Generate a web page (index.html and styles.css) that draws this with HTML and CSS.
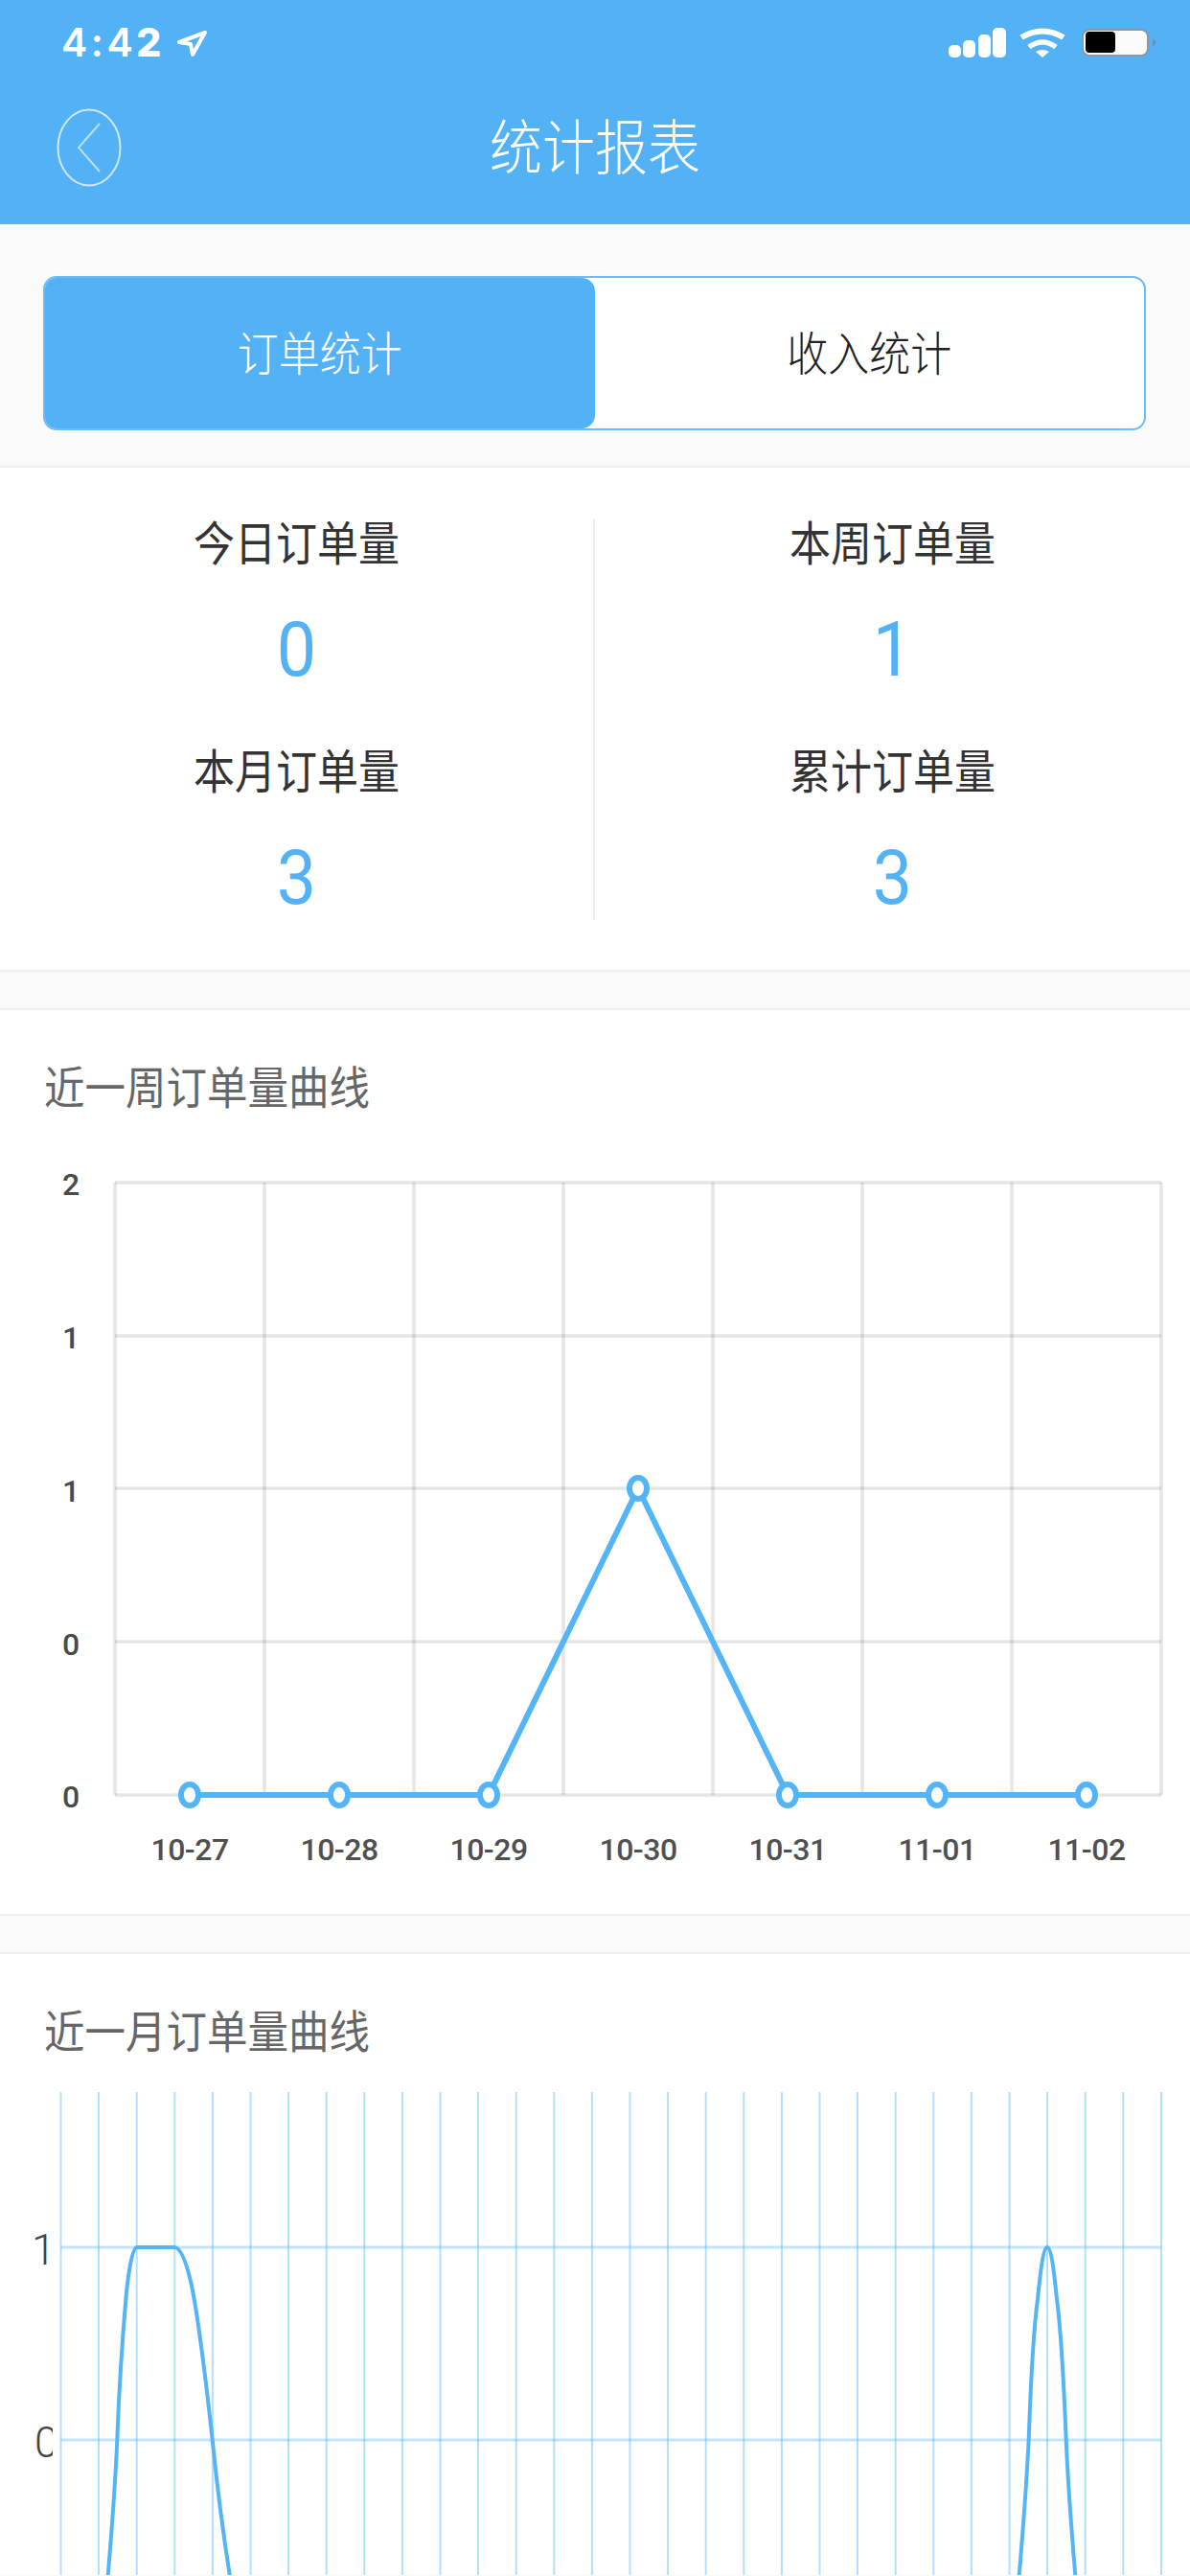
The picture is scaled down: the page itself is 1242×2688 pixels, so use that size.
FILE: index.html
```html
<!DOCTYPE html>
<html lang="zh">
<head>
<meta charset="utf-8">
<title>统计报表</title>
<link rel="stylesheet" href="styles.css">
</head>
<body>
<div class="page">
  <header class="header">
    <div class="status">
      <div class="status-left">
        <span class="time">4:4<b class="time-last">2</b></span>
        <svg class="loc" width="32" height="28" viewBox="0 0 32 28"><path d="M3 12 L30 2 L17 25 L15 14 Z" fill="none" stroke="#fff" stroke-width="4" stroke-linejoin="round"/></svg>
      </div>
      <div class="status-right">
        <svg class="signal" width="60" height="32" viewBox="0 0 60 32"><rect x="0" y="18" width="13" height="13" rx="5" fill="#fff"/><rect x="15" y="13" width="13" height="18" rx="5" fill="#fff"/><rect x="31" y="7" width="13" height="24" rx="5" fill="#fff"/><rect x="46" y="0" width="14" height="31" rx="5" fill="#fff"/></svg>
        <svg class="wifi" width="50" height="32" viewBox="0 0 50 32"><path d="M3 10 Q25 -3 47 10" fill="none" stroke="#fff" stroke-width="6"/><path d="M11 20 Q25 10 39 20" fill="none" stroke="#fff" stroke-width="5.5"/><path d="M18 25 Q25 21 32 25 L25 31 Z" fill="#fff"/></svg>
        <svg class="battery" width="78" height="32" viewBox="0 0 78 32"><rect x="1" y="2" width="68" height="27" rx="7" fill="#fafafa" stroke="#8a97a3" stroke-width="2"/><rect x="4" y="4" width="31" height="22" rx="4" fill="#000"/><path d="M74 11 L78 15.500 L74 20 Z" fill="#7b8a99"/></svg>
      </div>
    </div>
    <div class="navbar">
      <svg class="back" width="68" height="82" viewBox="0 0 68 82"><ellipse cx="34" cy="41" rx="32.500" ry="39.500" fill="none" stroke="#cfe8fc" stroke-width="2"/><path d="M45 16 L23 41 L45 66" fill="none" stroke="#b9defb" stroke-width="2"/></svg>
      <h1 class="nav-title">统计报表</h1>
    </div>
  </header>

  <section class="tabs-wrap">
    <div class="tabs">
      <div class="tab tab-active"><span class="tab-text">订单统计</span></div>
      <div class="tab"><span class="tab-text">收入统计</span></div>
    </div>
  </section>

  <section class="stats">
    <div class="stat-col">
      <div class="stat"><div class="stat-label">今日订单量</div><div class="stat-num"><span>0</span></div></div>
      <div class="stat stat-last"><div class="stat-label">本月订单量</div><div class="stat-num"><span>3</span></div></div>
    </div>
    <div class="stat-col stat-col-right">
      <div class="stat"><div class="stat-label">本周订单量</div><div class="stat-num"><span>1</span></div></div>
      <div class="stat stat-last"><div class="stat-label">累计订单量</div><div class="stat-num"><span>3</span></div></div>
    </div>
  </section>

  <section class="card card-week">
    <h2 class="card-title">近一周订单量曲线</h2>
    <svg class="chart chart-week" width="1242" height="835" viewBox="0 1162 1242 835">
      <g class="grid-gray">
        <path d="M120 1234H1212M120 1394H1212M120 1553H1212M120 1713H1212M120 1873H1212"/>
        <path d="M120 1234V1873M276 1234V1873M432 1234V1873M588 1234V1873M744 1234V1873M900 1234V1873M1056 1234V1873M1212 1234V1873"/>
      </g>
      <g class="ylabels">
        <text x="74" y="1247">2</text>
        <text x="74" y="1407">1</text>
        <text x="74" y="1567">1</text>
        <text x="74" y="1727">0</text>
        <text x="74" y="1886">0</text>
      </g>
      <path class="week-line" d="M198 1873H510L666 1553L822 1873H1134"/>
      <g class="dots">
        <ellipse cx="198" cy="1873" rx="9" ry="11"/>
        <ellipse cx="354" cy="1873" rx="9" ry="11"/>
        <ellipse cx="510" cy="1873" rx="9" ry="11"/>
        <ellipse cx="666" cy="1553" rx="9" ry="11"/>
        <ellipse cx="822" cy="1873" rx="9" ry="11"/>
        <ellipse cx="978" cy="1873" rx="9" ry="11"/>
        <ellipse cx="1134" cy="1873" rx="9" ry="11"/>
      </g>
      <g class="xlabels">
        <text x="198" y="1941">10-27</text>
        <text x="354" y="1941">10-28</text>
        <text x="510" y="1941">10-29</text>
        <text x="666" y="1941">10-30</text>
        <text x="822" y="1941">10-31</text>
        <text x="978" y="1941">11-01</text>
        <text x="1134" y="1941">11-02</text>
      </g>
    </svg>
  </section>

  <section class="card card-month">
    <h2 class="card-title">近一月订单量曲线</h2>
    <svg class="chart chart-month" width="1242" height="540" viewBox="0 2148 1242 540">
      <text class="ymonth" x="58" y="2364">1</text>
      <text class="ymonth" x="61" y="2565">0</text>
      <rect class="mask" x="55" y="2525" width="9" height="50"/>
      <g class="grid-blue">
        <path d="M63.500 2184V2688M103 2184V2688M142.700 2184V2688M182.300 2184V2688M221.900 2184V2688M261.500 2184V2688M301 2184V2688M340.700 2184V2688M380.300 2184V2688M419.900 2184V2688M459.500 2184V2688M499 2184V2688M538.700 2184V2688M578.300 2184V2688M617.900 2184V2688M657.500 2184V2688M697 2184V2688M736.700 2184V2688M776.300 2184V2688M815.900 2184V2688M855.500 2184V2688M895 2184V2688M934.700 2184V2688M974.300 2184V2688M1013.900 2184V2688M1053.500 2184V2688M1093 2184V2688M1132.700 2184V2688M1172.300 2184V2688M1212 2184V2688"/>
      </g>
      <g class="grid-blue-h">
        <path d="M63.500 2346H1212M63.500 2547H1212"/>
      </g>
      <path class="month-line" d="M112 2696 C116 2650 120 2600 122.300 2547 C124 2500 127 2450 131.700 2396 C134 2372 138 2346 143 2346 H182 C190 2346 196 2368 200 2386 C208 2425 216 2495 221.700 2547 C226 2590 232 2640 241 2696"/>
      <path class="month-line" d="M1063 2696 C1067 2650 1071 2600 1073.700 2547 C1076 2480 1079 2430 1083 2400 C1086 2370 1089 2346 1093 2346 C1097 2346 1100 2370 1103 2400 C1107 2430 1110 2480 1112.700 2547 C1115 2600 1119 2650 1123 2696"/>
    </svg>
  </section>
</div>
</body>
</html>
```
FILE: styles.css
```css
* { box-sizing: border-box; margin: 0; padding: 0; }
html, body { width: 1242px; height: 2688px; overflow: hidden; background: #fafafa; }
body { font-family: "Noto Sans CJK SC", "Liberation Sans", sans-serif; }
.page { width: 1242px; height: 2688px; overflow: hidden; display: flex; flex-direction: column; }

.header { height: 234px; background: #53b1f6; flex: none; }
.status { height: 90px; display: flex; justify-content: space-between; padding: 29px 35px 0 64px; }
.status-left { display: flex; align-items: flex-start; gap: 12px; }
.time { font: 600 41px/30px Inter, sans-serif; color: #fff; letter-spacing: 3.5px; }
.time-last { font-weight: 800; }
.loc { margin-top: 3px; }
.status-right { display: flex; align-items: flex-start; }
.signal { margin-right: 13px; }
.wifi { margin-right: 16px; }
.navbar { height: 144px; padding: 23px 0 0 59px; position: relative; }
.back { display: block; }
.nav-title { position: absolute; left: 0; right: 0; top: 20px; text-align: center; font-size: 55px; line-height: 80px; font-weight: 300; color: #fff; transform: scaleY(1.13); }

.tabs-wrap { height: 254px; flex: none; background: #fafafa; border-bottom: 2px solid #eeeeee; padding: 54px 46px 0 45px; }
.tabs { height: 161px; display: flex; border: 2px solid #6cbcf7; border-radius: 14px; overflow: hidden; background: #fff; }
.tab { width: 50%; display: flex; align-items: center; justify-content: center; padding-bottom: 5px; font-size: 43px; font-weight: 300; color: #222; }
.tab-text { display: block; transform: scaleY(1.13); }
.tab-active { background: #53b1f6; color: #fff; border-radius: 0 14px 14px 0; }

.stats { height: 526px; flex: none; display: flex; background: #fff; padding: 53px 0 0; border-bottom: 2px solid #eeeeee; }
.stat-col { width: 621px; height: 419px; border-right: 2px solid #eeeeee; display: flex; flex-direction: column; }
.stat-col-right { flex: 1; border-right: 0; }
.stat { height: 238px; flex: none; text-align: center; }
.stat-last { height: 181px; }
.stat-label { font-size: 43px; line-height: 52px; font-weight: 400; color: #333; margin-top: -3px; transform: scaleY(1.13); }
.stat-num { font: 400 80px/100px Roboto, sans-serif; color: #53b1f6; margin-top: 38px; }
.stat-num span { display: inline-block; transform: scaleX(0.92); }

.card { background: #fff; flex: none; border-top: 2px solid #eeeeee; }
.card-week { margin-top: 38px; height: 947px; border-bottom: 2px solid #eeeeee; }
.card-month { margin-top: 38px; height: 650px; }
.card-title { font-size: 42.500px; font-weight: 400; line-height: 60px; color: #666; padding: 48px 0 0 46px; height: 108px; transform-origin: left 78px; transform: scaleY(1.1); }
.chart { display: block; }

.grid-gray path { fill: none; stroke: rgba(0, 0, 0, 0.1); stroke-width: 3.500; }
.ylabels text { font: 500 32px Roboto, sans-serif; fill: #4a4a4a; text-anchor: middle; }
.xlabels text { font: 500 32px Roboto, sans-serif; fill: #505050; text-anchor: middle; letter-spacing: -0.5px; }
.week-line { fill: none; stroke: #53b5f8; stroke-width: 6; stroke-linejoin: round; }
.dots ellipse { fill: #fff; stroke: #53b5f8; stroke-width: 6; }

.grid-blue path { fill: none; stroke: rgba(70, 180, 250, 0.42); stroke-width: 2; }
.grid-blue-h path { fill: none; stroke: rgba(70, 180, 250, 0.35); stroke-width: 3; }
.ymonth { font: 300 45px Roboto, sans-serif; fill: #444; text-anchor: end; }
.mask { fill: #fff; }
.month-line { fill: none; stroke: #53b5f8; stroke-width: 4; }
```
